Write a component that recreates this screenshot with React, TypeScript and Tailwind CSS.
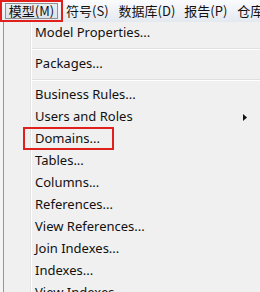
import { ReactNode } from "react";

const font = { fontFamily: '"Noto Sans", "Noto Sans CJK SC", sans-serif' };
const cjk = { fontFamily: '"Noto Sans CJK SC", "Noto Sans", sans-serif' };

function Item({ children, arrow }: { children: ReactNode; arrow?: boolean }) {
  return (
    <div className="relative h-[22px] flex items-center pl-[3px] text-[13px] text-[#111] whitespace-nowrap">
      {children}
      {arrow && (
        <svg
          className="absolute left-[211px] top-[8px]"
          width="4"
          height="7"
          viewBox="0 0 4 7"
        >
          <path d="M0 0 L4 3.5 L0 7 Z" fill="#111" />
        </svg>
      )}
    </div>
  );
}

function Separator() {
  return (
    <div className="h-[9px] flex flex-col justify-center">
      <div className="h-px bg-[#e0e0e0]" />
      <div className="h-px bg-white" />
    </div>
  );
}

export default function App() {
  return (
    <div className="w-[260px] h-[292px] overflow-hidden bg-white" style={font}>
      {/* menu bar */}
      <div
        className="h-[22px] flex items-stretch bg-gradient-to-b from-[#fafbfd] to-[#e4e9f0] text-[13px] text-[#111] whitespace-nowrap"
        style={cjk}
      >
        <div className="shrink-0 w-[63px] border-2 border-[#e0201c] px-[3px] pt-[1px] pb-[1px]">
          <div className="h-full flex items-center justify-center border border-[#8e9297] bg-gradient-to-b from-[#e9edf3] to-[#dde3ea]">
            模型(M)
          </div>
        </div>
        <div className="shrink-0 ml-[3px] flex items-center">符号(S)</div>
        <div className="shrink-0 ml-[10px] flex items-center">数据库(D)</div>
        <div className="shrink-0 ml-[9px] flex items-center">报告(P)</div>
        <div className="shrink-0 ml-[10px] flex items-center">仓库</div>
      </div>

      {/* dropdown */}
      <div className="relative flex h-[270px]">
        <div className="shrink-0 w-[3px] bg-[#f4f4f4]" />
        <div className="flex-1 flex bg-[#f0f0f0] border-l border-[#979797]">
          <div className="shrink-0 w-[27px] border-r border-[#e2e3e3]" />
          <div className="flex-1 border-l border-white">
            <Item>Model Properties...</Item>
            <Separator />
            <Item>Packages...</Item>
            <Separator />
            <Item>Business Rules...</Item>
            <Item arrow>Users and Roles</Item>
            <Item>Domains...</Item>
            <Item>Tables...</Item>
            <Item>Columns...</Item>
            <Item>References...</Item>
            <Item>View References...</Item>
            <Item>Join Indexes...</Item>
            <Item>Indexes...</Item>
            <Item>View Indexes...</Item>
          </div>
        </div>
        {/* annotation box around Domains */}
        <div className="absolute left-[23px] top-[105px] w-[91px] h-[23px] border-2 border-[#e0201c]" />
      </div>
    </div>
  );
}
